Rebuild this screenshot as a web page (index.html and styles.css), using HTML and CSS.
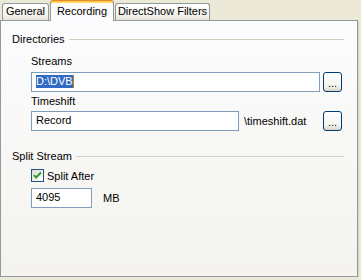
FILE: index.html
```html
<!DOCTYPE html>
<html lang="en">
<head>
    <meta charset="UTF-8">
    <title>Recording</title>
    <link rel="stylesheet" href="styles.css">
</head>
<body>
    <div class="tabs">
        <div class="tab tab-general">General</div>
        <div class="tab tab-recording active">Recording</div>
        <div class="tab tab-filters">DirectShow Filters</div>
    </div>
    <div class="panel">
        <div class="group-title"><span>Directories</span><div class="rule"></div></div>
        <div class="group-body">
            <div class="label label-first">Streams</div>
            <div class="row">
                <div class="textbox wide"><span class="selected">D:\DVB</span><span class="caret"></span></div>
                <button class="browse">...</button>
            </div>
            <div class="label">Timeshift</div>
            <div class="row">
                <div class="textbox medium">Record</div>
                <span class="suffix">\timeshift.dat</span>
                <button class="browse">...</button>
            </div>
        </div>

        <div class="group-title group-second"><span>Split Stream</span><div class="rule"></div></div>
        <div class="group-body">
            <div class="check-row">
                <span class="checkbox">
                    <svg width="11" height="11" viewBox="0 0 11 11">
                        <path d="M2 5 L4 7.5 L9 2.5" fill="none" stroke="#21a121" stroke-width="2"/>
                    </svg>
                </span>
                <span>Split After</span>
            </div>
            <div class="size-row">
                <div class="textbox small">4095</div>
                <span class="unit">MB</span>
            </div>
        </div>
    </div>
</body>
</html>
```

FILE: styles.css
```css
body {
    margin: 0;
    background-color: #ece9d8;
    font-family: 'Liberation Sans', Arial, sans-serif;
    font-size: 11px;
    color: #000;
}
.tabs {
    display: flex;
    align-items: flex-end;
    gap: 1px;
    height: 20px;
    padding-left: 2px;
}
.tab {
    box-sizing: border-box;
    height: 17px;
    line-height: 15px;
    text-align: center;
    border: 1px solid #919b9c;
    border-bottom: none;
    border-radius: 3px 3px 0 0;
    background: linear-gradient(#ffffff, #f3f2ec 70%, #e6e3d8);
}
.tab-general {
    width: 47px;
}
.tab-recording {
    width: 64px;
}
.tab-filters {
    width: 95px;
}
.tab.active {
    position: relative;
    z-index: 2;
    height: 21px;
    margin-bottom: -1px;
    padding-top: 2px;
    line-height: 16px;
    border-top: 1px solid #e68b2c;
    box-shadow: inset 0 1px 0 #ffc73c, inset 0 2px 0 #ffd878;
    background: #fcfcfe;
}
.panel {
    box-sizing: border-box;
    width: 358px;
    height: 257px;
    padding: 0 13px 0 11px;
    border: 1px solid #919b9c;
    background: linear-gradient(#fcfcfe, #f4f3ee);
    box-shadow: 1px 1px 0 #d6d2c2;
}
.group-title {
    display: flex;
    align-items: center;
    gap: 4px;
    height: 13px;
    margin-top: 12px;
    line-height: 13px;
}
.group-second {
    margin-top: 19px;
}
.rule {
    flex: 1;
    height: 1px;
    background-color: #d0d0bf;
}
.group-body {
    padding-left: 19px;
}
.label {
    height: 13px;
    line-height: 13px;
    margin: 3px 0 3px;
}
.label-first {
    margin-top: 9px;
    margin-bottom: 4px;
}
.row {
    display: flex;
    align-items: center;
    width: 311px;
}
.textbox {
    box-sizing: border-box;
    display: flex;
    align-items: center;
    height: 20px;
    padding: 0 4px 1px;
    line-height: 13px;
    border: 1px solid #7f9db9;
    background-color: #fff;
}
.wide {
    width: 289px;
}
.medium {
    width: 208px;
}
.small {
    width: 61px;
}
.selected {
    background-color: #316ac5;
    color: #fff;
}
.caret {
    width: 1px;
    height: 13px;
    background-color: #c08a00;
}
.suffix {
    margin-left: 5px;
}
.browse {
    box-sizing: border-box;
    width: 19px;
    height: 20px;
    margin-left: auto;
    padding: 2px 0 0;
    font-family: inherit;
    font-size: 11px;
    line-height: 11px;
    border: 1px solid #003c74;
    border-radius: 3px;
    background: linear-gradient(#ffffff, #f3f3ef 75%, #d8d2c6);
}
.check-row {
    display: flex;
    align-items: center;
    gap: 3px;
    height: 13px;
    margin-top: 6px;
}
.checkbox {
    box-sizing: border-box;
    display: flex;
    align-items: center;
    justify-content: center;
    width: 13px;
    height: 13px;
    border: 1px solid #1c5180;
    background: linear-gradient(135deg, #dcdcd7, #ffffff);
}
.size-row {
    display: flex;
    align-items: center;
    gap: 11px;
    margin-top: 6px;
}
```
